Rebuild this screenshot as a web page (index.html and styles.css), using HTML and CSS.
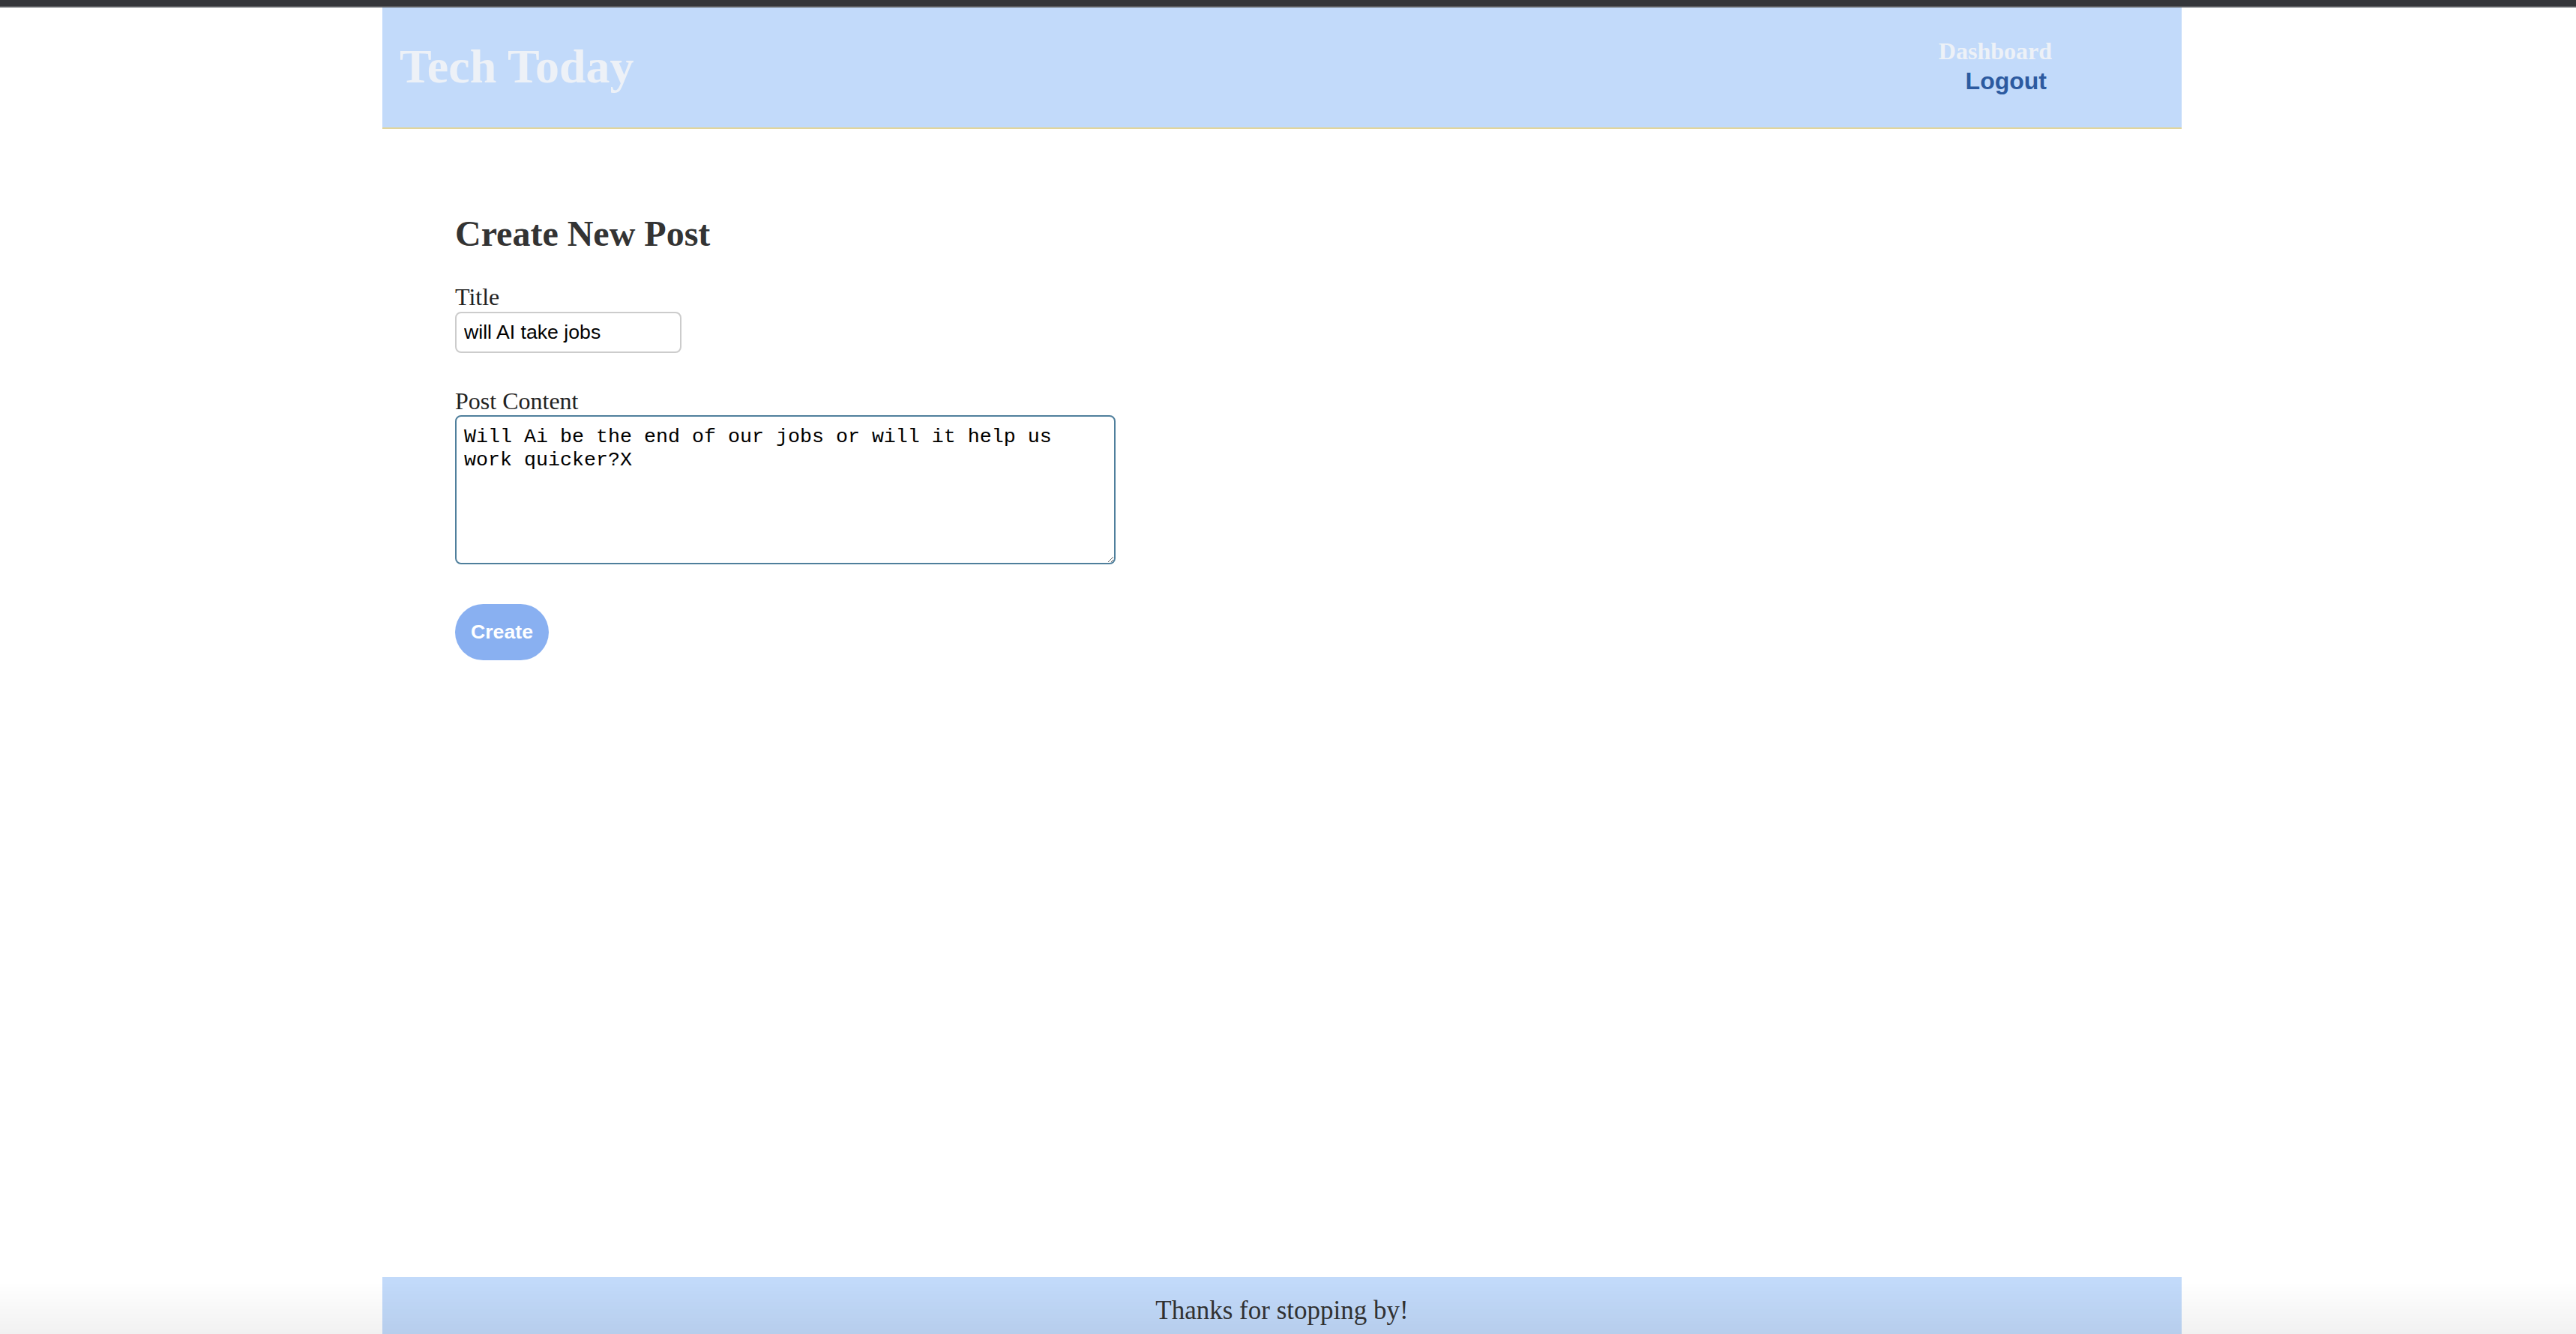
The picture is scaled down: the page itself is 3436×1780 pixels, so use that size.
FILE: index.html
```html
<!DOCTYPE html>
<html lang="en">
<head>
<meta charset="utf-8">
<title>Tech Today</title>
<link rel="stylesheet" href="styles.css">
</head>
<body>
<div class="topbar"></div>
<div class="page">
  <header class="site-header">
    <h1 class="brand">Tech Today</h1>
    <nav class="nav">
      <a class="nav-link" href="#">Dashboard</a>
      <button class="logout" type="button">Logout</button>
    </nav>
  </header>
  <main class="main">
    <h2 class="page-title">Create New Post</h2>
    <form class="post-form">
      <label class="field-label" for="title">Title</label>
      <input class="title-input" id="title" type="text" value="will AI take jobs">
      <label class="field-label content-label" for="content">Post Content</label>
      <textarea class="content-input" id="content">Will Ai be the end of our jobs or will it help us work quicker?X</textarea>
      <button class="create-btn" type="button">Create</button>
    </form>
  </main>
  <footer class="site-footer">Thanks for stopping by!</footer>
</div>
<div class="bottom-shade"></div>
</body>
</html>
```
FILE: styles.css
```css
* { box-sizing: border-box; }

html, body { height: 100%; }

body {
  margin: 0;
  padding-right: 16px;
  background: #ffffff;
  font-family: "Liberation Serif", "Times New Roman", serif;
  color: #333333;
  display: flex;
  flex-direction: column;
  overflow: hidden;
}

.topbar {
  height: 10px;
  background: #35363a;
  border-bottom: 2px solid #5b5c60;
  margin-right: -16px;
  flex: none;
}

.page {
  width: 2400px;
  margin: 0 auto;
  flex: 1;
  display: flex;
  flex-direction: column;
}

.site-header {
  height: 162px;
  background: #c2dafa;
  border-bottom: 2px solid #e1d59c;
  display: flex;
  align-items: center;
  justify-content: space-between;
  padding: 0 173px 0 23px;
  flex: none;
}

.brand {
  margin: 0;
  font-size: 64px;
  font-weight: bold;
  color: #edf1f7;
  line-height: 1;
  position: relative;
  top: -1px;
}

.nav {
  display: flex;
  flex-direction: column;
  align-items: flex-end;
  padding-bottom: 4px;
}

.nav-link {
  font-family: "Liberation Serif", "Times New Roman", serif;
  font-weight: bold;
  font-size: 32px;
  line-height: 40px;
  color: #edf1f7;
  text-decoration: none;
}

.logout {
  font-family: "Liberation Sans", Arial, sans-serif;
  font-weight: bold;
  font-size: 32px;
  line-height: 40px;
  color: #2c5aa0;
  background: none;
  border: none;
  padding: 0 7px 0 0;
  margin: 0;
}

.main {
  flex: 1;
  padding: 112px 97px 0;
}

.page-title {
  margin: 0;
  font-size: 48px;
  line-height: 55px;
  font-weight: bold;
  color: #333333;
}

.post-form {
  display: flex;
  flex-direction: column;
  align-items: flex-start;
}

.field-label {
  font-size: 32px;
  line-height: 37px;
  color: #222222;
  margin-top: 39px;
  margin-bottom: 1px;
}

.content-label {
  margin-top: 46px;
  margin-bottom: 0;
}

.title-input {
  width: 302px;
  height: 55px;
  border: 2px solid #cccccc;
  border-radius: 8px;
  padding: 0 10px;
  font-family: "Liberation Sans", Arial, sans-serif;
  font-size: 26.67px;
  color: #000000;
  background: #ffffff;
  outline: none;
}

.content-input {
  width: 881px;
  height: 199px;
  border: 2px solid #4f7f9c;
  border-radius: 8px;
  padding: 12px 10px;
  font-family: "Liberation Mono", "Courier New", monospace;
  font-size: 26.67px;
  line-height: 31px;
  color: #000000;
  background: #ffffff;
  outline: none;
  resize: both;
}

.create-btn {
  margin-top: 53px;
  width: 125px;
  height: 75px;
  border: none;
  border-radius: 38px;
  background: #89b0f1;
  color: #ffffff;
  font-family: "Liberation Sans", Arial, sans-serif;
  font-weight: bold;
  font-size: 26.67px;
  padding: 0;
}

.site-footer {
  flex: none;
  height: 76px;
  background: #c2dafa;
  text-align: center;
  font-size: 35px;
  line-height: 41px;
  padding-top: 24px;
  color: #333333;
}

.bottom-shade {
  position: fixed;
  left: 0;
  right: 0;
  bottom: 0;
  height: 70px;
  pointer-events: none;
  background: linear-gradient(to bottom, rgba(0, 0, 0, 0), rgba(0, 0, 0, 0.055));
}
```
